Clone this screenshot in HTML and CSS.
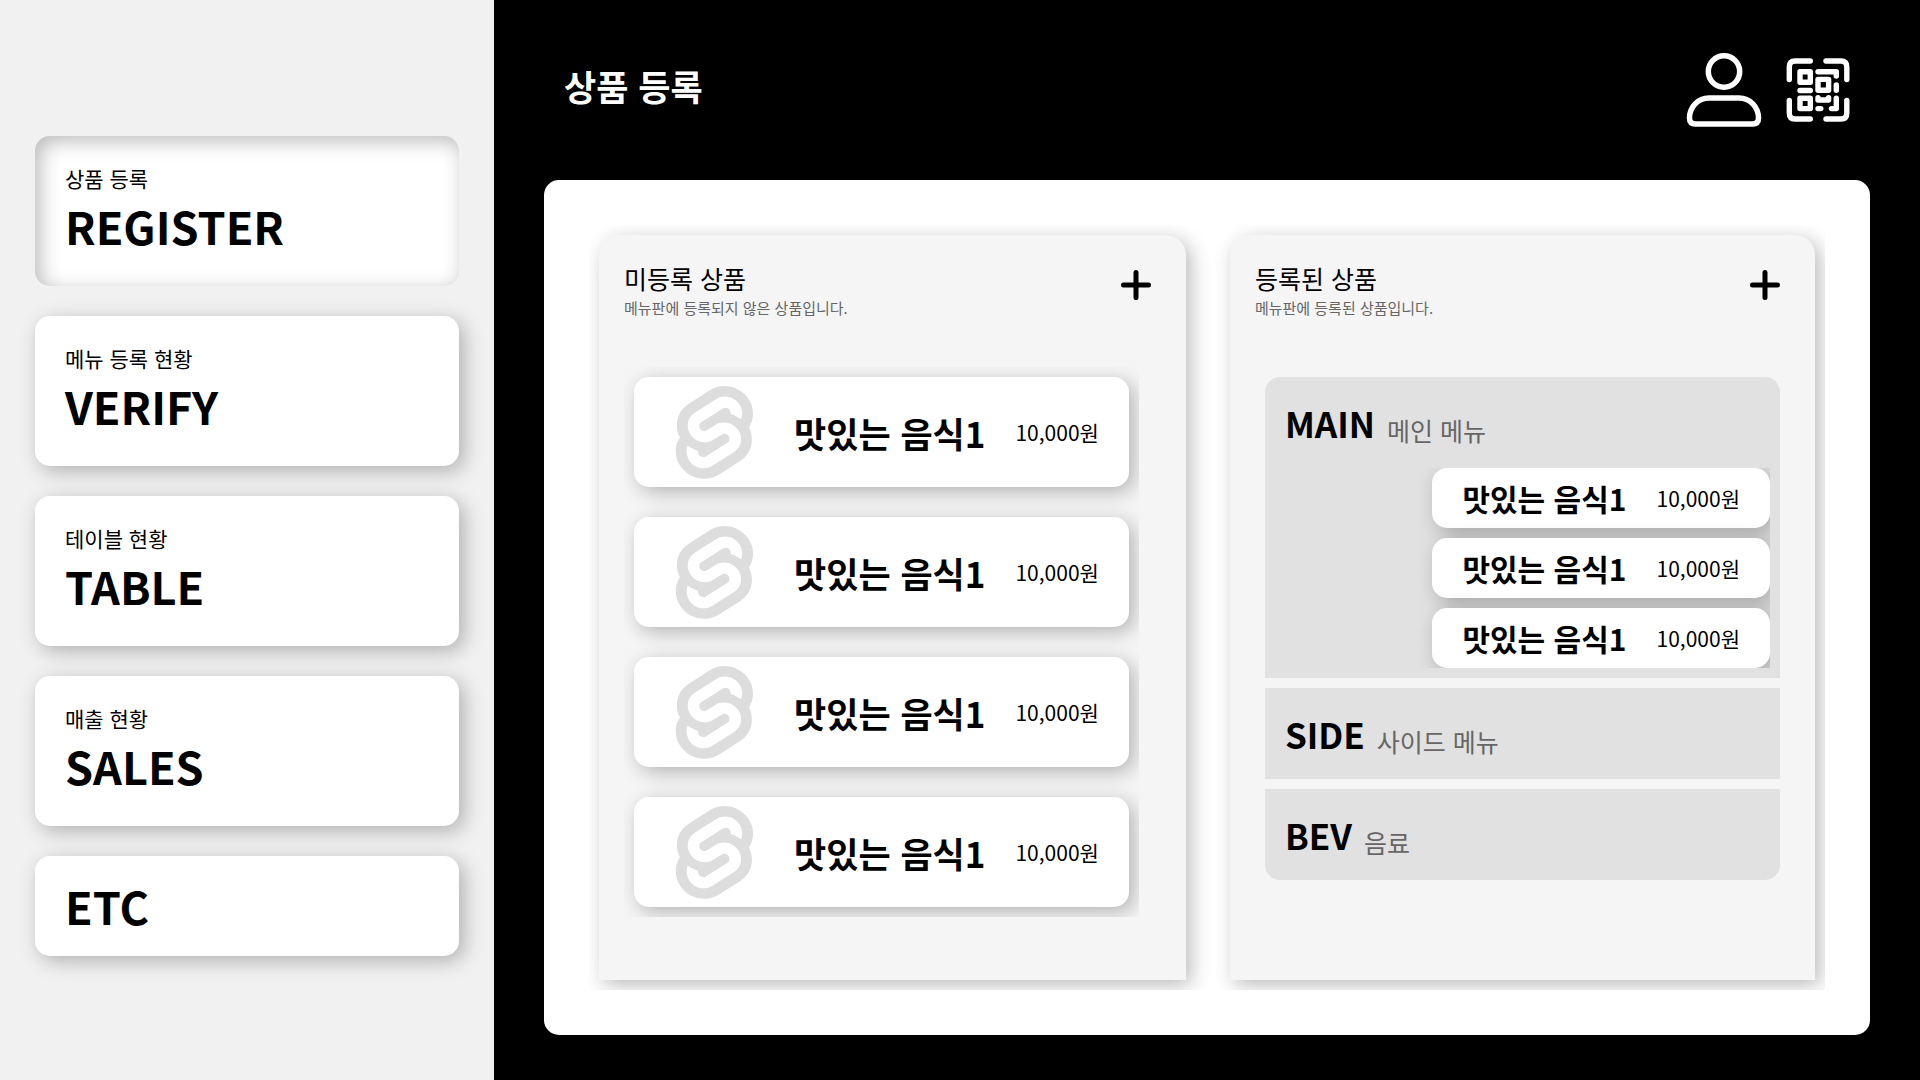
FILE: index.html
```html
<!DOCTYPE html>
<html lang="ko">
<head>
<meta charset="utf-8">
<title>상품 등록</title>
<link rel="stylesheet" href="styles.css">
</head>
<body>
<svg class="defs" aria-hidden="true">
  <symbol id="logo" viewBox="-15 -5 127 127">
    <path fill="#ddd" d="M91.8 15.6C80.9-.1 59.2-4.7 43.6 5.2L16.1 22.8C8.6 27.5 3.4 35.2 1.9 43.9c-1.3 7.3-.2 14.8 3.3 21.3-2.4 3.6-4 7.6-4.7 11.8-1.6 8.9.5 18.1 5.7 25.4 11 15.7 32.6 20.3 48.2 10.4l27.5-17.5c7.5-4.7 12.7-12.4 14.2-21.1 1.3-7.3.2-14.8-3.3-21.3 2.4-3.6 4-7.6 4.7-11.8 1.7-9-.4-18.2-5.7-25.5"/>
    <path fill="#fff" d="M40.9 103.9c-8.9 2.3-18.2-1.2-23.4-8.7-3.2-4.4-4.4-9.9-3.5-15.3.2-.9.4-1.7.6-2.6l.5-1.6 1.4 1c3.3 2.4 6.9 4.2 10.8 5.4l1 .3-.1 1c-.1 1.4.3 2.9 1.1 4.1 1.6 2.3 4.4 3.4 7.1 2.7.6-.2 1.2-.4 1.7-.7L65.500 72c1.4-.9 2.3-2.2 2.6-3.8.3-1.6-.1-3.3-1-4.600-1.600-2.300-4.400-3.300-7.100-2.600-.6.2-1.200.4-1.700.7l-10.500 6.700c-1.700 1.100-3.600 1.900-5.600 2.400-8.900 2.300-18.200-1.200-23.400-8.700-3.100-4.400-4.400-9.900-3.400-15.300.9-5.200 4.100-9.900 8.600-12.700l27.500-17.500c1.700-1.100 3.600-1.900 5.600-2.500 8.900-2.300 18.200 1.200 23.400 8.700 3.200 4.400 4.400 9.900 3.500 15.300-.2.9-.4 1.700-.7 2.600l-.5 1.600-1.400-1c-3.300-2.400-6.900-4.200-10.800-5.400l-1-.3.1-1c.1-1.400-.3-2.900-1.100-4.100-1.600-2.300-4.400-3.300-7.100-2.600-.6.2-1.200.4-1.700.7L32.400 46.100c-1.400.9-2.300 2.200-2.600 3.800s.1 3.300 1 4.600c1.600 2.300 4.400 3.300 7.100 2.600.6-.2 1.200-.4 1.700-.7l10.500-6.700c1.700-1.100 3.600-1.900 5.600-2.500 8.900-2.300 18.200 1.200 23.400 8.700 3.200 4.400 4.400 9.900 3.500 15.300-.9 5.200-4.100 9.900-8.600 12.700l-27.500 17.500c-1.700 1.100-3.600 1.900-5.600 2.500"/>
  </symbol>
  <symbol id="plus" viewBox="0 0 30 30">
    <path d="M15 2.500V27.500M2.500 15H27.500" fill="none" stroke="#000" stroke-width="5" stroke-linecap="round"/>
  </symbol>
</svg>
<div class="app">
  <nav class="sidebar">
    <a class="nav-card active" href="#register"><span class="nav-sub">상품 등록</span><span class="nav-title">REGISTER</span></a>
    <a class="nav-card" href="#verify"><span class="nav-sub">메뉴 등록 현황</span><span class="nav-title">VERIFY</span></a>
    <a class="nav-card" href="#table"><span class="nav-sub">테이블 현황</span><span class="nav-title">TABLE</span></a>
    <a class="nav-card" href="#sales"><span class="nav-sub">매출 현황</span><span class="nav-title">SALES</span></a>
    <a class="nav-card short" href="#etc"><span class="nav-title">ETC</span></a>
  </nav>
  <main class="main">
    <header class="topbar">
      <h1 class="page-title">상품 등록</h1>
      <div class="actions">
        <button class="icon-btn" aria-label="사용자">
          <svg width="76" height="76" viewBox="0 0 76 76" fill="none" stroke="#fff" stroke-width="5.500"><circle cx="38" cy="19.500" r="15.700"/><path d="M23 46H53C64 46 72.500 55 72.500 66C72.500 70 70.500 72 66.500 72H9.500C5.500 72 3.500 70 3.500 66C3.500 55 12 46 23 46Z"/></svg>
        </button>
        <button class="icon-btn" aria-label="QR 코드">
          <svg width="64" height="64" viewBox="0 0 64 64" fill="none" stroke="#fff" stroke-width="5.400" stroke-linecap="round" stroke-linejoin="round"><path d="M3.300 21.600V9Q3.300 3 9 3H24.300M40 3H55Q60.800 3 60.800 9V21.600M60.800 42.400V55Q60.800 61 55 61H40M24.300 61H9Q3.300 61 3.300 55V42.400"/><path d="M14 13.800H24.300V24.300H14ZM14 40.200H24.300V50.600H14ZM32 21.400H42.600V32.200H32ZM14 32.500H24.300M32 13.800H50.300V18M50.300 27V32.300M32 39.700V42H42.600V39.700M50.300 40.200V50.600H45.500M32 50.600H34.800"/></svg>
        </button>
      </div>
    </header>
    <div class="board">
      <div class="columns">
        <section class="column">
          <div class="column-head">
            <div><h2 class="column-title">미등록 상품</h2><p class="column-desc">메뉴판에 등록되지 않은 상품입니다.</p></div>
            <button class="add-btn" aria-label="미등록 상품 추가"><svg width="30" height="30"><use href="#plus"/></svg></button>
          </div>
          <ul class="product-list">
            <li class="product"><svg class="thumb"><use href="#logo"/></svg><span class="product-name">맛있는 음식1</span><span class="price">10,000원</span></li>
            <li class="product"><svg class="thumb"><use href="#logo"/></svg><span class="product-name">맛있는 음식1</span><span class="price">10,000원</span></li>
            <li class="product"><svg class="thumb"><use href="#logo"/></svg><span class="product-name">맛있는 음식1</span><span class="price">10,000원</span></li>
            <li class="product"><svg class="thumb"><use href="#logo"/></svg><span class="product-name">맛있는 음식1</span><span class="price">10,000원</span></li>
          </ul>
        </section>
        <section class="column">
          <div class="column-head">
            <div><h2 class="column-title">등록된 상품</h2><p class="column-desc">메뉴판에 등록된 상품입니다.</p></div>
            <button class="add-btn" aria-label="등록된 상품 추가"><svg width="30" height="30"><use href="#plus"/></svg></button>
          </div>
          <div class="groups">
            <section class="group">
              <h3 class="group-head">MAIN <span class="group-sub">메인 메뉴</span></h3>
              <ul class="menu-list">
                <li class="menu-item"><span class="menu-name">맛있는 음식1</span><span class="price">10,000원</span></li>
                <li class="menu-item"><span class="menu-name">맛있는 음식1</span><span class="price">10,000원</span></li>
                <li class="menu-item"><span class="menu-name">맛있는 음식1</span><span class="price">10,000원</span></li>
              </ul>
            </section>
            <section class="group"><h3 class="group-head">SIDE <span class="group-sub">사이드 메뉴</span></h3></section>
            <section class="group"><h3 class="group-head">BEV <span class="group-sub">음료</span></h3></section>
          </div>
        </section>
      </div>
    </div>
  </main>
</div>
</body>
</html>
```
FILE: styles.css
```css
* { box-sizing: border-box; margin: 0; padding: 0; }
:root { --shadow: 5px 5px 20px rgba(0, 0, 0, .27); }
body { background: #000; color: #000; font-family: "Noto Sans CJK KR", sans-serif; }
ul { list-style: none; }
button { border: 0; background: none; cursor: pointer; }
svg { display: block; }
.defs { position: absolute; width: 0; height: 0; }
.app { display: grid; grid-template-columns: 494px 1fr; min-height: 100vh; }

.sidebar { display: flex; flex-direction: column; gap: 30px; padding: 136px 35px 0; background: #f1f1f1; }
.nav-card { display: flex; flex-direction: column; justify-content: center; height: 150px; padding: 0 30px; border-radius: 15px; background: #fff; box-shadow: var(--shadow); color: #000; text-decoration: none; }
.nav-card.active { box-shadow: inset var(--shadow); }
.nav-card.short { height: 100px; }
.nav-sub { font-size: 21px; line-height: 30px; }
.nav-title { font-size: 45px; line-height: 66px; font-weight: 700; }

.main { display: flex; flex-direction: column; padding: 0 50px 45px; }
.topbar { display: flex; align-items: center; justify-content: space-between; height: 180px; padding: 0 20px; }
.page-title { padding-bottom: 10px; color: #fff; font-size: 35px; line-height: 51px; }
.actions { display: flex; align-items: center; gap: 24px; }

.board { display: flex; flex: 1; padding: 45px; border-radius: 15px; background: #fff; }
.columns { display: grid; flex: 1; grid-template-columns: 1fr 1fr; gap: 44px; padding: 10px; overflow: hidden; }
.column { padding: 25px 35px 0; border-radius: 20px 20px 0 0; background: #f5f5f5; box-shadow: var(--shadow); }
.column-head { display: flex; justify-content: space-between; height: 107px; margin-left: -10px; }
.column-title { font-size: 25px; line-height: 36px; font-weight: 400; }
.column-desc { color: #666; font-size: 15px; line-height: 24px; }
.add-btn { align-self: flex-start; padding-top: 10px; }

.product-list { display: flex; flex-direction: column; gap: 30px; margin-right: 12px; margin-left: -10px; padding: 10px; overflow: hidden; }
.product { display: flex; align-items: center; gap: 30px; height: 110px; padding: 0 30px; border-radius: 15px; background: #fff; box-shadow: var(--shadow); white-space: nowrap; }
.thumb { flex: none; width: 100px; height: 100px; }
.product-name { flex: 1; font-size: 35px; font-weight: 700; }
.price { font-size: 21px; }

.groups { display: flex; flex-direction: column; gap: 10px; padding-top: 10px; }
.group { background: #e1e1e1; }
.group:first-child { padding-bottom: 10px; border-radius: 15px 15px 0 0; }
.group:last-child { border-radius: 0 0 15px 15px; }
.group-head { display: flex; align-items: flex-end; gap: 12px; padding: 20px; font-size: 35px; line-height: 51px; }
.group-sub { color: #666; font-size: 25px; line-height: 36px; font-weight: 400; }
.menu-list { display: flex; flex-direction: column; align-items: flex-end; gap: 10px; margin-right: 10px; overflow: hidden; }
.menu-item { display: flex; align-items: center; gap: 30px; height: 60px; padding: 0 30px; border-radius: 15px; background: #fff; box-shadow: var(--shadow); white-space: nowrap; }
.menu-name { font-size: 30px; font-weight: 700; }
```
